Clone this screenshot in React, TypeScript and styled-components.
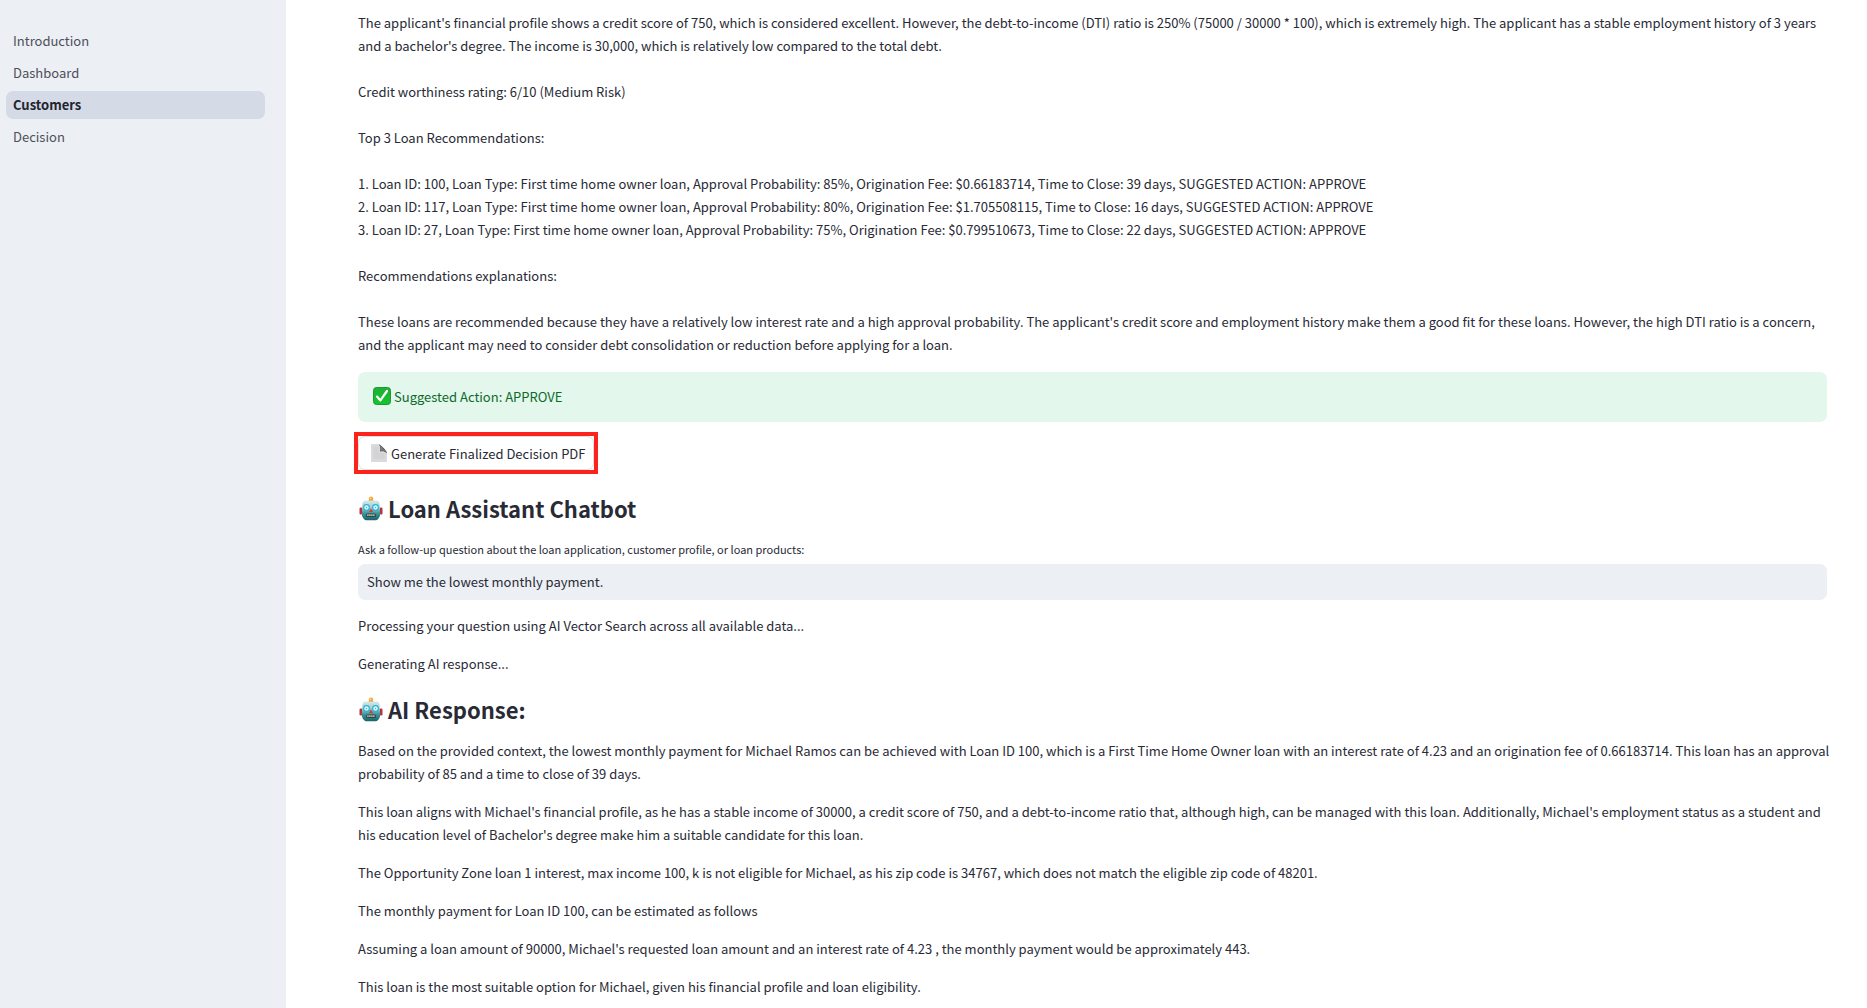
import React, { useState } from "react";
import styled, { createGlobalStyle } from "styled-components";

const GlobalStyle = createGlobalStyle`
  *, *::before, *::after { box-sizing: border-box; }
  body {
    margin: 0;
    background: #ffffff;
    color: #282a35;
    font-family: "Noto Sans CJK SC", "Noto Sans", sans-serif;
    font-size: 13px;
    line-height: 23px;
  }
`;

const Shell = styled.div`
  display: grid;
  grid-template-columns: 286px minmax(0, 1fr);
  min-height: 100vh;
`;

const Sidebar = styled.nav`
  display: flex;
  flex-direction: column;
  gap: 4px;
  padding: 27px 21px 0 6px;
  background: #eceff4;
`;

const NavLink = styled.a<{ $active?: boolean }>`
  padding: 2px 7px 3px;
  line-height: 23px;
  border-radius: 7px;
  text-decoration: none;
  color: ${(p) => (p.$active ? "#22242d" : "#4c4f5a")};
  font-weight: ${(p) => (p.$active ? 700 : 400)};
  background: ${(p) => (p.$active ? "#d4dae6" : "transparent")};
`;

const Main = styled.main`
  display: flex;
  flex-direction: column;
  align-items: stretch;
  padding: 11px 40px 0 72px;
`;

const Report = styled.div`
  display: flex;
  flex-direction: column;
  gap: 23px;
`;

const Text = styled.p`
  margin: 0;
`;

const Success = styled.div`
  display: flex;
  align-items: center;
  gap: 3px;
  min-height: 50px;
  margin-top: 16px;
  padding: 0 15px 2px;
  border-radius: 7px;
  background: #e3f7ec;
  color: #0d6a2b;
`;

const Highlight = styled.div`
  align-self: flex-start;
  margin: 10px 0 0 -4px;
  border: 4px solid #fb231b;
`;

const PdfButton = styled.button`
  display: flex;
  align-items: center;
  gap: 3px;
  height: 34px;
  padding: 0 8px 0 11px;
  border: 1px solid #dddde0;
  border-radius: 7px;
  background: #ffffff;
  color: #282a35;
  font: inherit;
  cursor: pointer;
`;

const Heading = styled.h2`
  display: flex;
  align-items: center;
  gap: 5px;
  margin: 0;
  padding: 17px 0 12px;
  font-size: 22px;
  line-height: 35px;
  font-weight: 700;
`;

const Label = styled.label`
  font-size: 11px;
  line-height: 23px;
`;

const Question = styled.input`
  width: 100%;
  height: 36px;
  margin: 3px 0 14px;
  padding: 0 8px 2px;
  border: 1px solid #eceff4;
  border-radius: 7px;
  outline: none;
  background: #eceff4;
  color: #282a35;
  font: inherit;
`;

const Messages = styled.div`
  display: flex;
  flex-direction: column;
  gap: 15px;
  margin-right: -10px;
`;

const CheckIcon = () => (
  <svg width="18" height="18" viewBox="0 0 18 18" aria-hidden="true">
    <defs>
      <linearGradient id="check" x1="0" y1="0" x2="0" y2="1">
        <stop offset="0" stopColor="#1fae35" />
        <stop offset="1" stopColor="#12c52c" />
      </linearGradient>
    </defs>
    <rect x="0.5" y="0.5" width="17" height="17" rx="3" fill="url(#check)" stroke="#1a9a31" />
    <path d="M4 9.6 7.4 13.4 14 4" fill="none" stroke="#fff" strokeWidth="2.2" strokeLinecap="round" strokeLinejoin="round" />
  </svg>
);

const PageIcon = () => (
  <svg width="18" height="18" viewBox="0 0 18 18" aria-hidden="true">
    <path d="M1.500.500h8L16.500 8v9.500h-15z" fill="#dadadc" stroke="#d0d0d2" strokeWidth=".6" />
    <path d="M9 .5c2 .5 7.500 5.500 8 9-2-2.200-4-2.500-7-2 .8-2.500.5-5-1-7z" fill="#45474c" />
    <path d="M9 .5c2.500 1.200 4 3 4.200 4.500 1.500.5 3 2 3.800 3.500-2-1.500-4-2-6.200-1.800C11.300 4.500 10.500 2.500 9 .5z" fill="#77797e" />
    <path d="M3.500 4h5M3.500 6h5M3.500 8h5M3.500 10h11M3.500 12h11M3.500 14h11" stroke="#c3c4c7" strokeWidth=".6" />
  </svg>
);

const RobotIcon = () => (
  <svg width="25" height="26" viewBox="0 0 25 26" aria-hidden="true">
    <defs>
      <linearGradient id="face" x1="0" y1="0" x2="0" y2="1">
        <stop offset="0" stopColor="#dbe9ea" />
        <stop offset=".35" stopColor="#a4cace" />
        <stop offset=".65" stopColor="#3e949c" />
        <stop offset="1" stopColor="#17636c" />
      </linearGradient>
    </defs>
    <rect x="1.500" y="11.500" width="3" height="7" rx="1.300" fill="#b3343c" />
    <rect x="21.500" y="11.500" width="3" height="7" rx="1.300" fill="#b3343c" />
    <path d="M10.500 5.200c0-2 5-2 5 0z" fill="#c8443c" />
    <circle cx="13" cy="2.800" r="2.200" fill="#f3a52e" />
    <circle cx="12.500" cy="2.200" r=".8" fill="#ffe9a8" />
    <path d="M8 4.500h10c2.500 0 3.500 1.500 3.700 4l.4 8.500c.2 3-.6 4.500-2 6-.8.9-1.600 1.200-3.100 1.200H9c-1.500 0-2.300-.3-3.100-1.200-1.400-1.500-2.200-3-2-6l.4-8.500c.2-2.500 1.200-4 3.700-4z" fill="url(#face)" />
    <circle cx="8.500" cy="11.500" r="3.400" fill="#27b4d8" />
    <circle cx="17.500" cy="11.500" r="3.400" fill="#27b4d8" />
    <circle cx="8.500" cy="11.500" r="2.200" fill="#d4fbff" />
    <circle cx="17.500" cy="11.500" r="2.200" fill="#d4fbff" />
    <circle cx="8.500" cy="11.500" r=".7" fill="#5aa9bd" />
    <circle cx="17.500" cy="11.500" r=".7" fill="#5aa9bd" />
    <path d="m13 12.500 2 3.500h-4z" fill="#e0342f" />
    <rect x="8" y="17.500" width="10" height="3.400" rx="1.500" fill="#1f4a50" />
    <path d="M9.200 19.200h7.600" stroke="#eeb79a" strokeWidth="1.700" strokeDasharray="1.400 .6" />
  </svg>
);

const pages = ["Introduction", "Dashboard", "Customers", "Decision"];

const loans = [
  "Loan ID: 100, Loan Type: First time home owner loan, Approval Probability: 85%, Origination Fee: $0.66183714, Time to Close: 39 days, SUGGESTED ACTION: APPROVE",
  "Loan ID: 117, Loan Type: First time home owner loan, Approval Probability: 80%, Origination Fee: $1.705508115, Time to Close: 16 days, SUGGESTED ACTION: APPROVE",
  "Loan ID: 27, Loan Type: First time home owner loan, Approval Probability: 75%, Origination Fee: $0.799510673, Time to Close: 22 days, SUGGESTED ACTION: APPROVE",
];

const answer = [
  "Based on the provided context, the lowest monthly payment for Michael Ramos can be achieved with Loan ID 100, which is a First Time Home Owner loan with an interest rate of 4.23 and an origination fee of 0.66183714. This loan has an approval probability of 85 and a time to close of 39 days.",
  "This loan aligns with Michael's financial profile, as he has a stable income of 30000, a credit score of 750, and a debt-to-income ratio that, although high, can be managed with this loan. Additionally, Michael's employment status as a student and his education level of Bachelor's degree make him a suitable candidate for this loan.",
  "The Opportunity Zone loan 1 interest, max income 100, k is not eligible for Michael, as his zip code is 34767, which does not match the eligible zip code of 48201.",
  "The monthly payment for Loan ID 100, can be estimated as follows",
  "Assuming a loan amount of 90000, Michael's requested loan amount and an interest rate of 4.23 , the monthly payment would be approximately 443.",
  "This loan is the most suitable option for Michael, given his financial profile and loan eligibility.",
];

export default function App() {
  const [question, setQuestion] = useState("Show me the lowest monthly payment.");
  return (
    <>
      <GlobalStyle />
      <Shell>
        <Sidebar>
          {pages.map((page) => (
            <NavLink key={page} href={`#${page.toLowerCase()}`} $active={page === "Customers"}>
              {page}
            </NavLink>
          ))}
        </Sidebar>
        <Main>
          <Report>
            <Text>
              The applicant's financial profile shows a credit score of 750, which is considered excellent. However, the
              debt-to-income (DTI) ratio is 250% (75000 / 30000 * 100), which is extremely high. The applicant has a
              stable employment history of 3 years and a bachelor's degree. The income is 30,000, which is relatively
              low compared to the total debt.
            </Text>
            <Text>Credit worthiness rating: 6/10 (Medium Risk)</Text>
            <Text>Top 3 Loan Recommendations:</Text>
            <div>
              {loans.map((loan, i) => (
                <Text key={loan}>{`${i + 1}. ${loan}`}</Text>
              ))}
            </div>
            <Text>Recommendations explanations:</Text>
            <Text>
              These loans are recommended because they have a relatively low interest rate and a high approval
              probability. The applicant's credit score and employment history make them a good fit for these loans.
              However, the high DTI ratio is a concern, and the applicant may need to consider debt consolidation or
              reduction before applying for a loan.
            </Text>
          </Report>
          <Success role="status">
            <CheckIcon />
            Suggested Action: APPROVE
          </Success>
          <Highlight>
            <PdfButton type="button">
              <PageIcon />
              Generate Finalized Decision PDF
            </PdfButton>
          </Highlight>
          <Heading>
            <RobotIcon />
            Loan Assistant Chatbot
          </Heading>
          <Label htmlFor="question">
            Ask a follow-up question about the loan application, customer profile, or loan products:
          </Label>
          <Question id="question" type="text" value={question} onChange={(e) => setQuestion(e.target.value)} />
          <Messages>
            <Text>Processing your question using AI Vector Search across all available data...</Text>
            <Text>Generating AI response...</Text>
          </Messages>
          <Heading>
            <RobotIcon />
            AI Response:
          </Heading>
          <Messages>
            {answer.map((text) => (
              <Text key={text}>{text}</Text>
            ))}
          </Messages>
        </Main>
      </Shell>
    </>
  );
}
